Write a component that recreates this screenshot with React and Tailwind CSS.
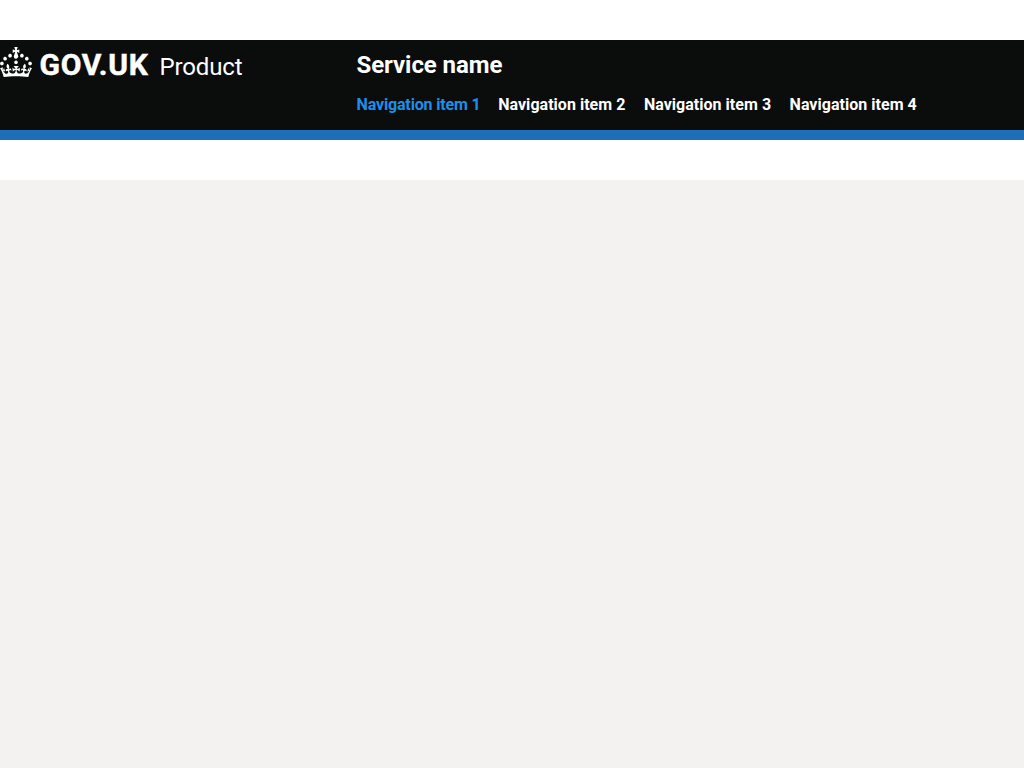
const items = ["Navigation item 1", "Navigation item 2", "Navigation item 3", "Navigation item 4"];

function Crown() {
  return (
    <svg viewBox="0 0 32 30" className="h-[30px] w-8 shrink-0" fill="currentColor" aria-hidden="true">
      <path d="M22.6 10.4c-1 .4-2-.1-2.4-1-.4-.9.1-2 1-2.4.9-.4 2 .1 2.4 1s-.1 2-1 2.4m-5.9 6.7c-.9.4-2-.1-2.4-1-.4-.9.1-2 1-2.4.9-.4 2 .1 2.4 1s-.1 2-1 2.4m10.8-3.7c-1 .4-2-.1-2.4-1-.4-.9.1-2 1-2.4.9-.4 2 .1 2.4 1s0 2-1 2.4m3.3 4.8c-1 .4-2-.1-2.4-1-.4-.9.1-2 1-2.4.9-.4 2 .1 2.4 1s-.1 2-1 2.4M17 4.7l2.3 1.2V2.5l-2.3.7-.2-.2.9-3h-3.4l.9 3-.2.2c-.1.1-2.3-.7-2.3-.7v3.4L15 4.7c.1.1.1.2.2.2l-1.3 4c-.1.2-.1.4-.1.6 0 1.1.8 2 1.9 2.2h.7c1-.2 1.9-1.1 1.9-2.1 0-.2 0-.4-.1-.6l-1.3-4c-.1-.2 0-.2.1-.3m-7.6 5.7c.9.4 2-.1 2.4-1 .4-.9-.1-2-1-2.4-.9-.4-2 .1-2.4 1s0 2 1 2.4m-5 3c.9.4 2-.1 2.4-1 .4-.9-.1-2-1-2.4-.9-.4-2 .1-2.4 1s.1 2 1 2.4m-3.2 4.8c.9.4 2-.1 2.4-1 .4-.9-.1-2-1-2.4-.9-.4-2 .1-2.4 1s0 2 1 2.4m14.8 11c4.4 0 8.6.3 12.3.8 1.1-4.5 2.4-7 3.7-8.8l-2.5-.9c.2 1.3.3 1.9 0 2.7-.4-.4-.8-1.1-1.1-2.3l-1.2 4c.7-.5 1.3-.8 2-.9-1.1 2.5-2.6 3.1-3.5 3-1.1-.2-1.7-1.2-1.5-2.1.3-1.2 1.5-1.5 2.1-.1 1.1-2.3-.8-3-2-2.3 1.9-1.9 2.1-3.5.6-5.6-2.1 1.6-2.1 3.2-1.2 5.5-1.2-1.4-3.2-.6-2.5 1.6.9-1.4 2.1-.5 1.9.8-.2 1.1-1.7 2.1-3.5 1.9-2.7-.2-2.9-2.1-2.9-3.6.7-.1 1.9.5 2.9 1.9l.4-4.3c-1.1 1.1-2.1 1.4-3.2 1.4.4-1.2 2.1-3 2.1-3h-5.4s1.7 1.9 2.1 3c-1.1 0-2.1-.2-3.2-1.4l.4 4.3c1-1.4 2.2-2 2.9-1.9-.1 1.5-.2 3.4-2.9 3.6-1.9.2-3.4-.8-3.5-1.9-.2-1.3 1-2.2 1.9-.8.7-2.3-1.2-3-2.5-1.6.9-2.2.9-3.9-1.2-5.5-1.5 2-1.3 3.7.6 5.6-1.2-.7-3.1 0-2 2.3.6-1.4 1.8-1.1 2.1.1.2.9-.3 1.9-1.5 2.1-.9.2-2.4-.5-3.5-3 .6 0 1.2.3 2 .9l-1.2-4c-.3 1.1-.7 1.9-1.1 2.3-.3-.8-.2-1.4 0-2.7l-2.9.9C1.3 23 2.6 25.5 3.7 30c3.7-.5 7.9-.8 12.3-.8" />
    </svg>
  );
}

export default function App() {
  return (
    <div className="min-h-screen bg-[#f3f2f1] font-['Roboto',sans-serif]">
      <div className="bg-white py-10">
        <header className="flex h-[100px] border-b-[10px] border-[#1d70b8] bg-[#0b0c0c] text-white">
          <a className="flex h-[50px] w-[356px] shrink-0 pt-[7px]">
            <Crown />
            <span className="ml-[7.5px] w-[113px] whitespace-nowrap text-[30px] leading-[36px] font-bold tracking-[0.7px] [-webkit-text-stroke:0.5px_white]">GOV.UK</span>
            <span className="ml-[7px] whitespace-nowrap pt-[5px] text-[24px] leading-[30px] font-normal tracking-[-0.15px]">Product</span>
          </a>
          <div className="pt-[10px] pl-[0.5px]">
            <div className="text-[24px] leading-[30px] font-bold tracking-[-0.07px]">Service name</div>
            <nav className="mt-[15px] flex text-[16px] leading-5 font-bold">
              {items.map((item, i) => (
                <a key={item} className={i === 0 ? "w-[141.7px] whitespace-nowrap tracking-[-0.15px] text-[#1d8feb]" : "w-[145.7px] whitespace-nowrap tracking-[0.03px]"}>{item}</a>
              ))}
            </nav>
          </div>
        </header>
      </div>
    </div>
  );
}
